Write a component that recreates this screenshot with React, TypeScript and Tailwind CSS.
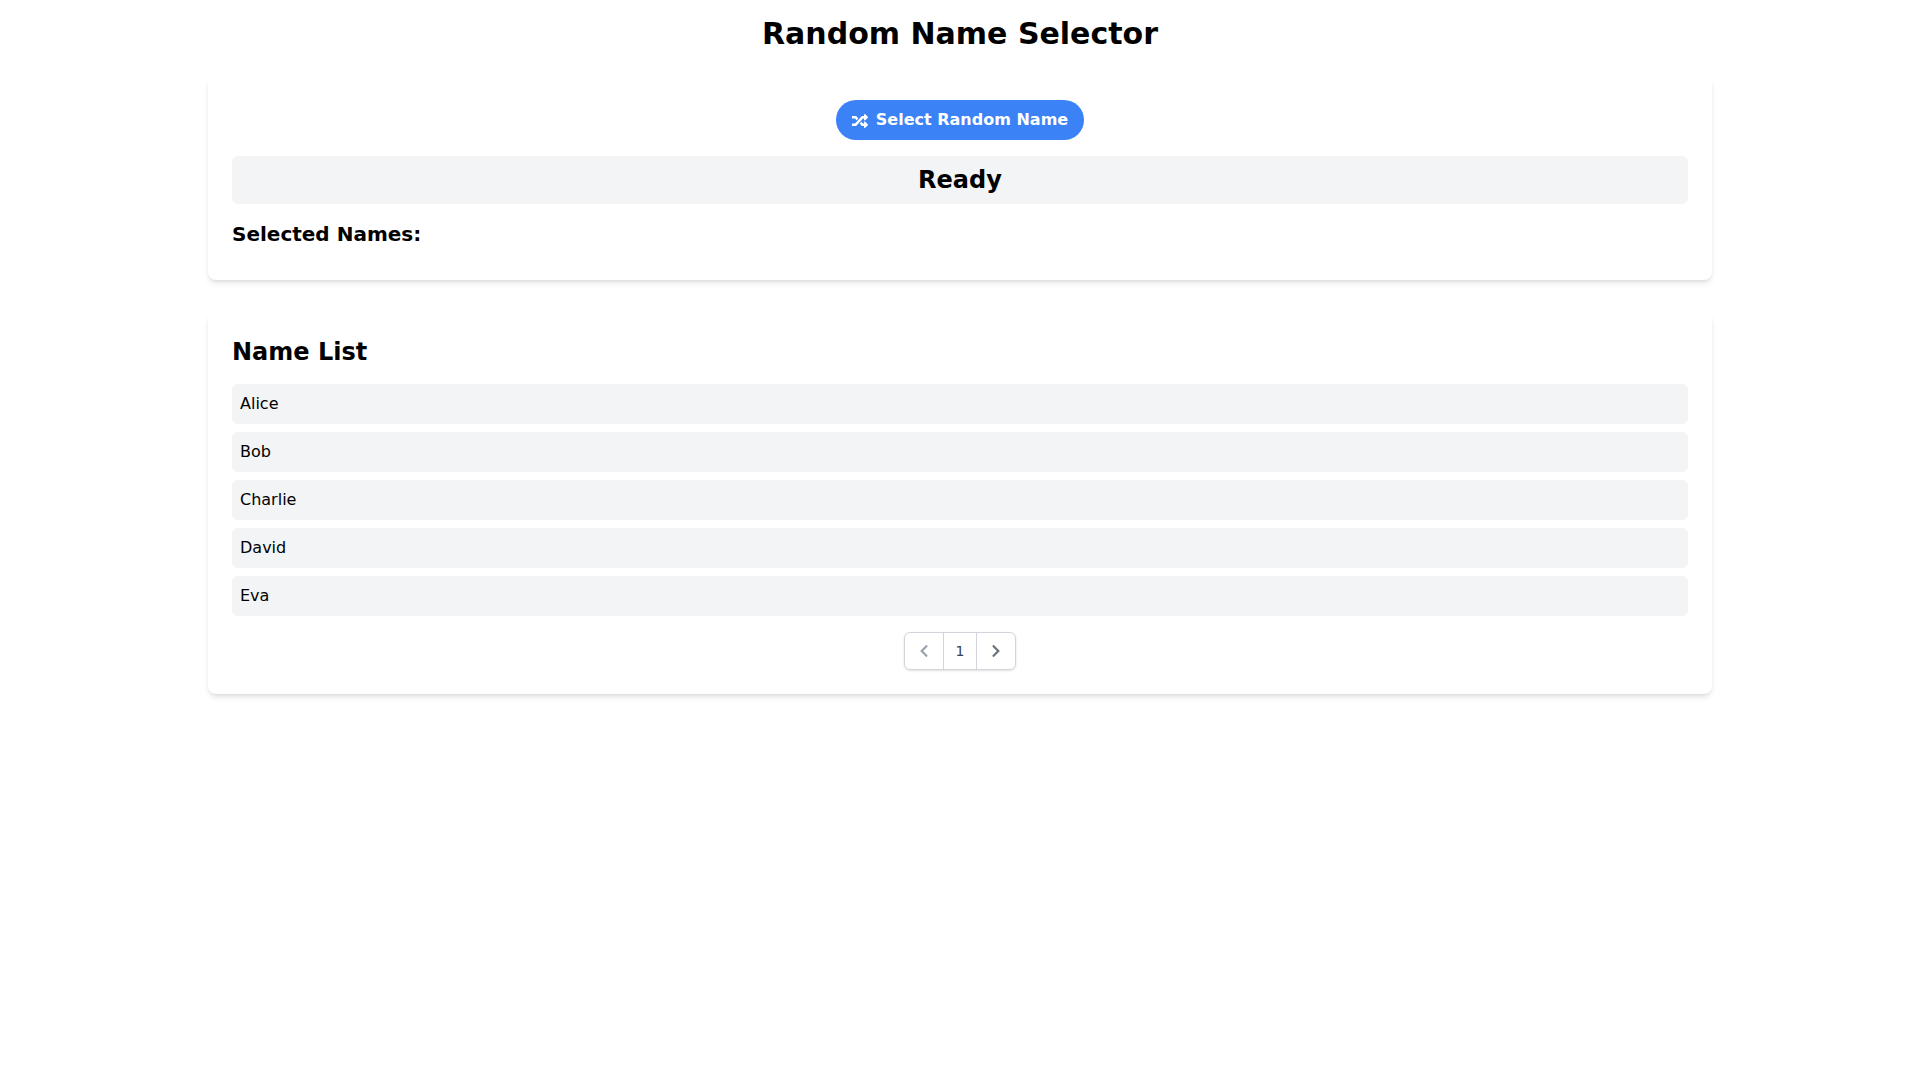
import { FaChevronLeft, FaChevronRight, FaRandom } from 'react-icons/fa';

const names = ['Alice', 'Bob', 'Charlie', 'David', 'Eva'];

export default function App() {
  return (
    <div className="min-h-screen bg-white text-black font-['DejaVu_Sans',sans-serif]">
      <div className="mx-auto max-w-[1536px] p-4">
        <h1 className="mb-6 text-center text-3xl font-bold">Random Name Selector</h1>

        <div className="mb-8 rounded-lg bg-white p-6 shadow-md">
          <div className="mb-4 flex justify-center">
            <button className="flex items-center rounded-full bg-[#3b82f6] px-4 py-2 font-bold text-white">
              <FaRandom className="mr-2 mt-0.5" size={16} />
              Select Random Name
            </button>
          </div>
          <div className="mb-4 rounded-md bg-[#f3f4f6] p-2 text-center text-2xl font-bold">Ready</div>
          <h2 className="mb-2 text-xl font-bold">Selected Names:</h2>
        </div>

        <div className="rounded-lg bg-white p-6 shadow-md">
          <h2 className="mb-4 text-2xl font-bold">Name List</h2>
          <ul className="flex flex-col gap-2">
            {names.map((name) => (
              <li key={name} className="rounded-md bg-[#f3f4f6] p-2">
                {name}
              </li>
            ))}
          </ul>
          <div className="mt-4 flex justify-center">
            <nav className="inline-flex -space-x-px rounded-md shadow-sm">
              <button className="flex items-center rounded-l-md border border-[#d1d5db] bg-white px-3 py-2 text-[#9ca3af]">
                <FaChevronLeft size={14} />
              </button>
              <button className="flex items-center border border-[#d1d5db] bg-white px-3 py-2 text-sm text-[#374151]">
                1
              </button>
              <button className="flex items-center rounded-r-md border border-[#d1d5db] bg-white px-3 py-2 text-[#6b7280]">
                <FaChevronRight size={14} />
              </button>
            </nav>
          </div>
        </div>
      </div>
    </div>
  );
}
